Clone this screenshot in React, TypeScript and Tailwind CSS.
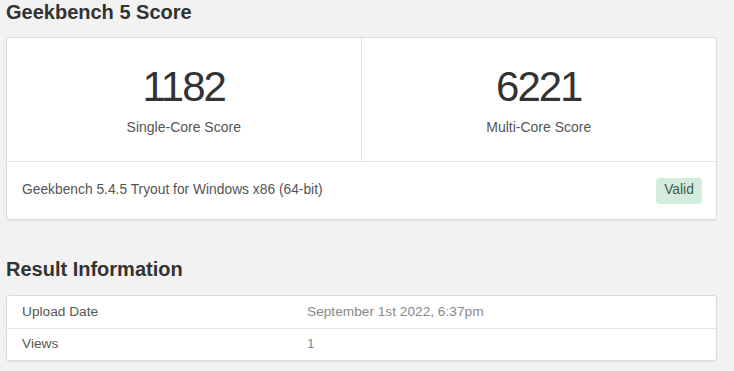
const font = { fontFamily: '"Liberation Sans", Arial, sans-serif' };

function ScoreCell({ value, label, divider }: { value: string; label: string; divider?: boolean }) {
  return (
    <div className={`flex flex-col items-center pt-[28px] ${divider ? 'border-r border-[#e3e3e3]' : ''}`}>
      <div className="text-[42px] leading-[42px] tracking-[-2px] text-[#333]">{value}</div>
      <div className="mt-[9px] text-[14px] leading-[20px] text-[#555]">{label}</div>
    </div>
  );
}

export default function App() {
  return (
    <div className="min-h-[371px] w-[734px] bg-[#f2f2f2] pl-[6px] pr-[17px]" style={font}>
      {/* Score */}
      <h2 className="h-[24px] text-[20px] font-bold leading-[24px] text-[#333]">Geekbench 5 Score</h2>
      <div className="mt-[13px] rounded-[3px] border border-[#dcdcdc] bg-white shadow-[0_1px_2px_rgba(0,0,0,0.06)]">
        <div className="grid h-[124px] grid-cols-2 border-b border-[#e3e3e3]">
          <ScoreCell value="1182" label="Single-Core Score" divider />
          <ScoreCell value="6221" label="Multi-Core Score" />
        </div>
        <div className="flex h-[57px] items-center justify-between pl-[15px] pr-[14px]">
          <span className="text-[13.8px] text-[#555]">Geekbench 5.4.5 Tryout for Windows x86 (64-bit)</span>
          <span className="flex h-[26px] w-[46px] items-center justify-center rounded-[4px] bg-[#d4ecdd] text-[13.8px] text-[#3f5a4c]">
            Valid
          </span>
        </div>
      </div>

      {/* Result info */}
      <h2 className="mt-[37px] h-[24px] text-[20px] font-bold leading-[24px] text-[#333]">Result Information</h2>
      <div className="mt-[14px] rounded-[3px] border border-[#dcdcdc] bg-white text-[13.7px] shadow-[0_1px_2px_rgba(0,0,0,0.06)]">
        <div className="flex h-[33px] items-center border-b border-[#e6e6e6]">
          <div className="w-[285px] pl-[15px] text-[#555]">Upload Date</div>
          <div className="pl-[15px] text-[#888]">September 1st 2022, 6:37pm</div>
        </div>
        <div className="flex h-[31px] items-center">
          <div className="w-[285px] pl-[15px] text-[#555]">Views</div>
          <div className="pl-[15px] text-[#888]">1</div>
        </div>
      </div>
    </div>
  );
}
